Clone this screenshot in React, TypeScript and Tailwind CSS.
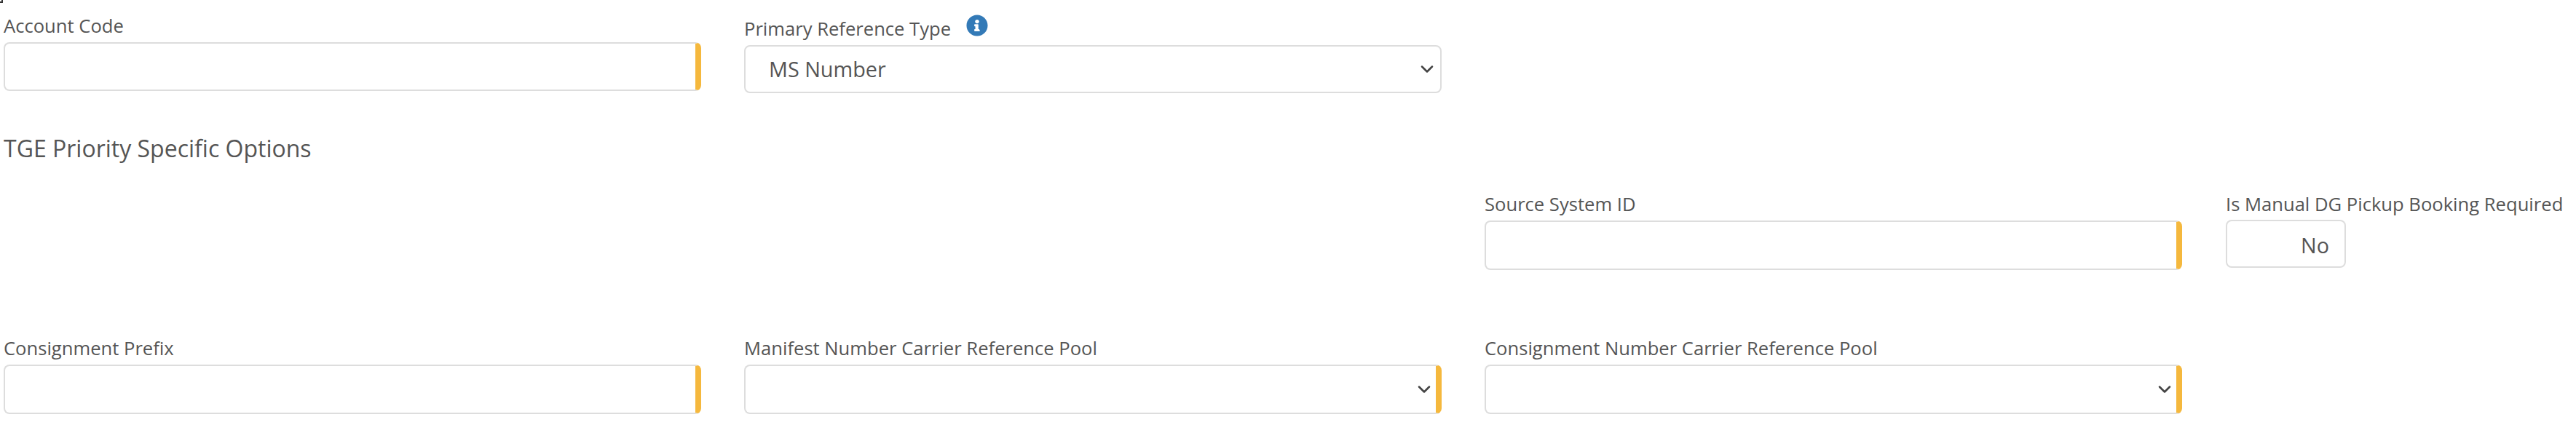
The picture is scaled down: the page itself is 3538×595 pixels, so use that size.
import { ChevronDown } from 'lucide-react';

function Label({ text }: { text: string }) {
  return <label className="block h-[33px] mb-[6px] text-[25.6px] leading-[33px] text-[#555] whitespace-nowrap">{text}</label>;
}

function TextField({ label, height }: { label: string; height: string }) {
  return (
    <div>
      <Label text={label} />
      <input
        type="text"
        className={`block w-full ${height} rounded-lg border-2 border-[#ddd] border-r-8 border-r-[#f5b83d] bg-white outline-none`}
      />
    </div>
  );
}

function SelectField({ label, value, height, required }: { label?: string; value: string; height: string; required?: boolean }) {
  return (
    <div className="relative">
      <select
        defaultValue={value}
        className={`block w-full ${height} appearance-none rounded-lg border-2 border-[#ddd] bg-white pl-[32px] text-[28.8px] text-[#555] outline-none ${required ? 'border-r-8 border-r-[#f5b83d]' : ''}`}
        aria-label={label}
      >
        <option>{value}</option>
      </select>
      <ChevronDown
        className={`absolute top-1/2 -translate-y-1/2 w-[28px] h-[28px] text-[#444] pointer-events-none ${required ? 'right-[10px]' : 'right-[6px]'}`}
        strokeWidth={2.2}
      />
    </div>
  );
}

export default function App() {
  return (
    <div className="relative w-[3538px] h-[595px] overflow-hidden bg-white pl-[5px] font-['Open_Sans',sans-serif]">
      {/* stray corner from the page above */}
      <div className="absolute left-0 top-0 w-[4px] h-[4px] border-r-2 border-b-2 border-[#333]" />

      {/* Top row */}
      <div className="grid grid-cols-[958px_958px] gap-x-[59px] pt-[19px]">
        <TextField label="Account Code" height="h-[67px]" />
        <div className="pt-[4px]">
          <div className="flex items-start gap-[21px]">
            <Label text="Primary Reference Type" />
            <svg viewBox="0 0 512 512" className="w-[30px] h-[30px] -mt-[3px] fill-[#337ab7]">
              <path d="M256 8C119 8 8 119 8 256s111 248 248 248 248-111 248-248S393 8 256 8zm0 110c27 0 48 21 48 46s-21 46-48 46-48-21-48-46 21-46 48-46zm66 262c0 7-5 12-12 12H202c-7 0-12-5-12-12v-26c0-7 5-12 12-12h12v-64h-12c-7 0-12-5-12-12v-26c0-7 5-12 12-12h72c7 0 12 5 12 12v102h12c7 0 12 5 12 12z" />
            </svg>
          </div>
          <SelectField label="Primary Reference Type" value="MS Number" height="h-[66px]" />
        </div>
      </div>

      <h3 className="mt-[56px] text-[32px] leading-[40px] font-normal text-[#555]">TGE Priority Specific Options</h3>

      {/* Source system row */}
      <div className="grid grid-cols-[958px_958px_958px_1fr] gap-x-[59px] mt-[40px]">
        <div className="col-start-3">
          <TextField label="Source System ID" height="h-[68px]" />
        </div>
        <div className="ml-[1px]">
          <Label text="Is Manual DG Pickup Booking Required" />
          <div className="-mt-[1px] w-[165px] h-[66px] rounded-lg border-2 border-[#ddd] bg-white pr-[21px] text-right text-[28.8px] leading-[66px] text-[#555]">
            No
          </div>
        </div>
      </div>

      {/* Reference pool row */}
      <div className="grid grid-cols-[958px_958px_958px] gap-x-[59px] mt-[91px]">
        <TextField label="Consignment Prefix" height="h-[68px]" />
        <div>
          <Label text="Manifest Number Carrier Reference Pool" />
          <SelectField label="Manifest Number Carrier Reference Pool" value="" height="h-[68px]" required />
        </div>
        <div>
          <Label text="Consignment Number Carrier Reference Pool" />
          <SelectField label="Consignment Number Carrier Reference Pool" value="" height="h-[68px]" required />
        </div>
      </div>
    </div>
  );
}
